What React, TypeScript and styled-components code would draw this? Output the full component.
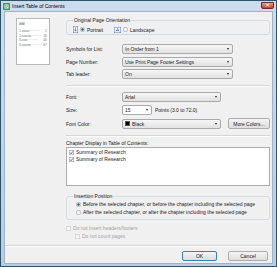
import React from "react";
import styled, { createGlobalStyle } from "styled-components";

const Global = createGlobalStyle`
  html, body { margin: 0; padding: 0; background: #ffffff; }
  * { box-sizing: border-box; }
`;

const Window = styled.div`
  width: 277px;
  height: 267px;
  background: linear-gradient(#cddcec, #b9cde2);
  border: 1px solid #2f5366;
  display: flex;
  flex-direction: column;
  font-family: "Liberation Sans", Arial, sans-serif;
  font-size: 5px;
  color: #1a1a1a;
`;

const TitleBar = styled.div`
  height: 10px;
  flex: none;
  display: flex;
  align-items: center;
  gap: 2px;
  padding: 0 2px 0 2px;
`;

const Title = styled.span`
  flex: 1;
  font-size: 5px;
  line-height: 6px;
  color: #000;
`;

const CloseBtn = styled.div`
  width: 13px;
  height: 7px;
  margin-top: -2px;
  border: 1px solid #6f2b22;
  border-radius: 0 0 2px 2px;
  background: linear-gradient(#e69a8a, #c3412c);
  display: flex;
  align-items: center;
  justify-content: center;
`;

const Client = styled.div`
  flex: 1;
  margin: 0 3px 2px 3px;
  border: 1px solid #9fb3c7;
  background: #f0f0f0;
  display: flex;
  flex-direction: column;
`;

const Main = styled.div`
  display: flex;
  padding: 5px 0 6px 11px;
`;

const Preview = styled.div`
  width: 34px;
  height: 47px;
  margin-top: 1px;
  flex: none;
  background: #ffffff;
  border: 1px solid #b8b8b8;
  padding: 3px 2px 0 2px;
  font-size: 3.4px;
  line-height: 4.4px;
  color: #777;
  display: flex;
  flex-direction: column;
`;

const PreviewHead = styled.div`
  font-weight: bold;
  color: #555;
  margin-bottom: 3px;
`;

const PreviewLine = styled.div`
  display: flex;
  justify-content: space-between;
  white-space: nowrap;
`;

const RightCol = styled.div`
  margin-left: 16px;
  width: 204px;
  display: flex;
  flex-direction: column;
`;

const Group = styled.fieldset<{ $h: number; $mt?: number }>`
  margin: ${(p) => p.$mt ?? 0}px 0 0 0;
  padding: 0 0 0 6px;
  height: ${(p) => p.$h}px;
  border: 1px solid #d3dbe2;
  border-radius: 3px;
  min-width: 0;
`;

const Legend = styled.legend`
  font-size: 5px;
  line-height: 6px;
  padding: 0 1px;
  margin-left: 0px;
  color: #1a1a1a;
`;

const OrientRow = styled.div`
  display: flex;
  align-items: center;
  margin-top: 3px;
  height: 7px;
`;

const OrientItem = styled.div<{ $w?: number }>`
  display: flex;
  align-items: center;
  gap: 2px;
  width: ${(p) => (p.$w ? `${p.$w}px` : "auto")};
`;

const RadioList = styled.div`
  display: flex;
  flex-direction: column;
  gap: 2px;
  margin-top: 2px;
  padding-left: 3px;
`;

const RadioRow = styled.label`
  display: flex;
  align-items: center;
  gap: 2px;
  height: 6px;
  white-space: nowrap;
`;

const FormGrid = styled.div<{ $mt: number; $gap: number }>`
  display: grid;
  grid-template-columns: 56px 1fr;
  row-gap: ${(p) => p.$gap}px;
  align-items: center;
  margin-top: ${(p) => p.$mt}px;
`;

const FieldLabel = styled.span`
  white-space: nowrap;
`;

const FieldCell = styled.div`
  display: flex;
  align-items: center;
  gap: 3px;
`;

const Select = styled.div<{ $w: number; $edit?: boolean }>`
  width: ${(p) => p.$w}px;
  height: 10px;
  border: 1px solid #a9a9a9;
  border-radius: 2px;
  background: ${(p) => (p.$edit ? "#ffffff" : "linear-gradient(#f6f6f6, #e1e1e1)")};
  display: flex;
  align-items: center;
  padding: 0 3px 0 2px;
  gap: 2px;
  white-space: nowrap;
`;

const SelectText = styled.span`
  flex: 1;
`;

const Arrow = styled.span`
  width: 0;
  height: 0;
  border-left: 1.5px solid transparent;
  border-right: 1.5px solid transparent;
  border-top: 2px solid #222;
`;

const Swatch = styled.span`
  width: 5px;
  height: 5px;
  background: #000;
  border: 1px solid #555;
`;

const Hint = styled.span`
  white-space: nowrap;
`;

const Button = styled.div<{ $w: number; $default?: boolean; $ml?: number }>`
  width: ${(p) => p.$w}px;
  height: ${(p) => (p.$default !== undefined ? 10 : 11)}px;
  margin-left: ${(p) => p.$ml ?? 0}px;
  border: 1px solid ${(p) => (p.$default ? "#3c7fb1" : "#acacac")};
  border-radius: 2px;
  background: linear-gradient(#f4f4f4, #dedede);
  display: flex;
  align-items: center;
  justify-content: center;
  white-space: nowrap;
  color: #1a1a1a;
`;

const Separator = styled.div<{ $mt: number; $mb: number }>`
  height: 2px;
  border-top: 1px solid #d5d5d5;
  border-bottom: 1px solid #ffffff;
  margin: ${(p) => p.$mt}px 0 ${(p) => p.$mb}px 0;
`;

const SectionLabel = styled.div`
  line-height: 6px;
  margin-top: 3px;
  white-space: nowrap;
`;

const ListBox = styled.div`
  margin-top: 1px;
  height: 39px;
  background: #ffffff;
  border: 1px solid #adadad;
  padding: 1px 2px;
  display: flex;
  flex-direction: column;
  gap: 1px;
`;

const CheckRow = styled.label<{ $indent?: number; $mt?: number; $disabled?: boolean }>`
  display: flex;
  align-items: center;
  gap: 2px;
  height: 6px;
  margin-left: ${(p) => p.$indent ?? 0}px;
  margin-top: ${(p) => p.$mt ?? 0}px;
  color: ${(p) => (p.$disabled ? "#a3a3a3" : "#1a1a1a")};
  white-space: nowrap;
`;

const Footer = styled.div`
  border-top: 1px solid #d5d5d5;
  box-shadow: inset 0 1px 0 #ffffff;
  display: flex;
  justify-content: flex-end;
  gap: 11px;
  padding: 5px 4px 0 0;
  flex: 1;
`;

function Radio({ on }: { on?: boolean }) {
  return (
    <svg width="5" height="5" viewBox="0 0 10 10">
      <circle cx="5" cy="5" r="4.4" fill="#f4f4f4" stroke="#8a8a8a" strokeWidth="1" />
      {on && <circle cx="5" cy="5" r="2.4" fill="#2c5d96" />}
    </svg>
  );
}

function Check({ on, disabled }: { on?: boolean; disabled?: boolean }) {
  return (
    <svg width="5" height="5" viewBox="0 0 10 10">
      <rect x="0.5" y="0.5" width="9" height="9" fill={disabled ? "#f4f4f4" : "#ffffff"} stroke={disabled ? "#c2c2c2" : "#8a8a8a"} />
      {on && <path d="M2.2 5.2 L4.2 7.4 L8 2.6" fill="none" stroke="#2a4a7c" strokeWidth="1.6" />}
    </svg>
  );
}

function PageIcon({ landscape }: { landscape?: boolean }) {
  return landscape ? (
    <svg width="7" height="6" viewBox="0 0 14 12">
      <rect x="0.5" y="0.5" width="13" height="11" fill="#ffffff" stroke="#4a78b0" />
      <path d="M4 9 L7 3 L10 9 M5.2 7 H8.8" fill="none" stroke="#2f64a8" strokeWidth="1.3" />
    </svg>
  ) : (
    <svg width="5" height="7" viewBox="0 0 10 14">
      <rect x="0.5" y="0.5" width="9" height="13" fill="#ffffff" stroke="#4a78b0" />
      <path d="M5 3 V10 M2.5 7.5 L5 10.5 L7.5 7.5" fill="none" stroke="#2f64a8" strokeWidth="1.3" />
    </svg>
  );
}

function AppIcon() {
  return (
    <svg width="7" height="7" viewBox="0 0 14 14">
      <rect x="0.5" y="0.5" width="13" height="13" rx="1.5" fill="#3f9a4f" stroke="#24602f" />
      <rect x="3" y="3" width="8" height="8" fill="#ffffff" />
      <path d="M4 5 H10 M4 7 H10 M4 9 H8" stroke="#3f7ab8" strokeWidth="1" />
    </svg>
  );
}

function SelectBox({ w, text, edit, swatch }: { w: number; text: string; edit?: boolean; swatch?: boolean }) {
  return (
    <Select $w={w} $edit={edit}>
      {swatch && <Swatch />}
      <SelectText>{text}</SelectText>
      <Arrow />
    </Select>
  );
}

const previewLines = [
  ["1.oooo", "1"],
  ["2.ooooo", "20"],
  ["3.ooo", "40"],
  ["4.ooooo", "67"],
];

export default function App() {
  return (
    <>
      <Global />
      <Window>
        <TitleBar>
          <AppIcon />
          <Title>Insert Table of Contents</Title>
          <CloseBtn>
            <svg width="5" height="4" viewBox="0 0 10 8">
              <path d="M2 1 L8 7 M8 1 L2 7" stroke="#ffffff" strokeWidth="2" />
            </svg>
          </CloseBtn>
        </TitleBar>
        <Client>
          <Main>
            <Preview>
              <PreviewHead>###</PreviewHead>
              {previewLines.map(([a, b]) => (
                <PreviewLine key={a}>
                  <span>{a} ·········</span>
                  <span>{b}</span>
                </PreviewLine>
              ))}
            </Preview>
            <RightCol>
              <Group $h={18}>
                <Legend>Original Page Orientation</Legend>
                <OrientRow>
                  <OrientItem $w={41}>
                    <PageIcon />
                    <Radio on />
                    <span>Portrait</span>
                  </OrientItem>
                  <OrientItem>
                    <PageIcon landscape />
                    <Radio />
                    <span>Landscape</span>
                  </OrientItem>
                </OrientRow>
              </Group>

              <FormGrid $mt={9} $gap={2.5}>
                <FieldLabel>Symbols for List:</FieldLabel>
                <FieldCell>
                  <SelectBox w={111} text="In Order from 1" />
                </FieldCell>
                <FieldLabel>Page Number:</FieldLabel>
                <FieldCell>
                  <SelectBox w={111} text="Use Print Page Footer Settings" />
                </FieldCell>
                <FieldLabel>Tab leader:</FieldLabel>
                <FieldCell>
                  <SelectBox w={111} text="On" />
                </FieldCell>
              </FormGrid>

              <Separator $mt={6} $mb={5} />

              <FormGrid $mt={0} $gap={3}>
                <FieldLabel>Font:</FieldLabel>
                <FieldCell>
                  <SelectBox w={99} text="Arial" />
                </FieldCell>
                <FieldLabel>Size:</FieldLabel>
                <FieldCell>
                  <SelectBox w={30} text="15" edit />
                  <Hint>Points (3.0 to 72.0)</Hint>
                </FieldCell>
                <FieldLabel>Font Color:</FieldLabel>
                <FieldCell>
                  <SelectBox w={99} text="Black" swatch />
                  <Button $w={42} $ml={4}>More Colors...</Button>
                </FieldCell>
              </FormGrid>

              <Separator $mt={6} $mb={0} />

              <SectionLabel>Chapter Display in Table of Contents:</SectionLabel>
              <ListBox>
                <CheckRow>
                  <Check on />
                  <span>Summary of Research</span>
                </CheckRow>
                <CheckRow>
                  <Check on />
                  <span>Summary of Research</span>
                </CheckRow>
              </ListBox>

              <Group $h={27} $mt={7}>
                <Legend>Insertion Position</Legend>
                <RadioList>
                  <RadioRow>
                    <Radio on />
                    <span>Before the selected chapter, or before the chapter including the selected page</span>
                  </RadioRow>
                  <RadioRow>
                    <Radio />
                    <span>After the selected chapter, or after the chapter including the selected page</span>
                  </RadioRow>
                </RadioList>
              </Group>

              <CheckRow $mt={5} $disabled>
                <Check disabled />
                <span>Do not insert headers/footers</span>
              </CheckRow>
              <CheckRow $mt={2} $indent={9} $disabled>
                <Check disabled />
                <span>Do not count pages</span>
              </CheckRow>
            </RightCol>
          </Main>
          <Footer>
            <Button $w={35} $default>OK</Button>
            <Button $w={40} $default={false}>Cancel</Button>
          </Footer>
        </Client>
      </Window>
    </>
  );
}
